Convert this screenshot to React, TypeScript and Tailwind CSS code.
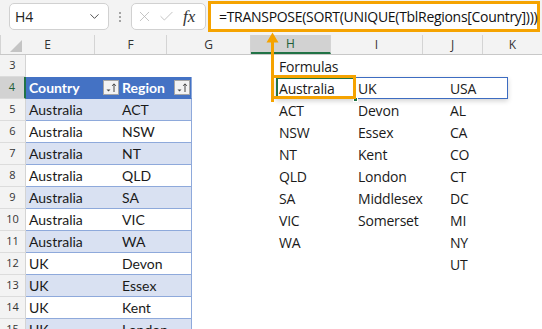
import React from "react";
import { ChevronDown, X, Check } from "lucide-react";

const colW = { E: 94, F: 72, G: 84, H: 80, I: 92, J: 60, K: 60 };

const tableData: [string, string][] = [
  ["Australia", "ACT"],
  ["Australia", "NSW"],
  ["Australia", "NT"],
  ["Australia", "QLD"],
  ["Australia", "SA"],
  ["Australia", "VIC"],
  ["Australia", "WA"],
  ["UK", "Devon"],
  ["UK", "Essex"],
  ["UK", "Kent"],
  ["UK", "London"],
  ["UK", "Middlesex"],
];

const H: Record<number, string> = { 3: "Formulas", 4: "Australia", 5: "ACT", 6: "NSW", 7: "NT", 8: "QLD", 9: "SA", 10: "VIC", 11: "WA" };
const I: Record<number, string> = { 4: "UK", 5: "Devon", 6: "Essex", 7: "Kent", 8: "London", 9: "Middlesex", 10: "Somerset" };
const J: Record<number, string> = { 4: "USA", 5: "AL", 6: "CA", 7: "CO", 8: "CT", 9: "DC", 10: "MI", 11: "NY", 12: "UT" };

function FilterBtn() {
  return (
    <div className="w-[16px] h-[15px] bg-[#f3f3f3] border border-[#a6a6a6] flex items-center justify-center">
      <svg width="14" height="13" viewBox="0 0 14 13">
        <path d="M2.5 8.5 L6.5 8.5 L4.5 10.5 Z" fill="#444" />
        <path d="M10 11 L10 3" stroke="#444" strokeWidth="1" />
        <path d="M8.2 4.8 L10 2.8 L11.8 4.8" stroke="#444" strokeWidth="1" fill="none" />
      </svg>
    </div>
  );
}

export default function App() {
  const rows = [3, 4, 5, 6, 7, 8, 9, 10, 11, 12, 13, 14, 15];
  return (
    <div className="relative w-[542px] h-[329px] overflow-hidden bg-white font-['Open_Sans',sans-serif] text-[#1a1a1a]">
      {/* Toolbar */}
      <div className="h-[35px] bg-[#f3f3f3] flex items-start pt-[3px]">
        <div className="ml-[9px] w-[100px] h-[27px] bg-white border border-[#d1d1d1] rounded-[5px] flex items-center pl-[5px] pr-[6px] justify-between">
          <span className="text-[14px] text-[#222]">H4</span>
          <ChevronDown size={15} strokeWidth={1.5} color="#444" />
        </div>
        <div className="w-[22px] h-[27px] flex flex-col items-center justify-center gap-[2px]">
          <div className="w-[2px] h-[2px] bg-[#8a8a8a] rounded-full" />
          <div className="w-[2px] h-[2px] bg-[#8a8a8a] rounded-full" />
          <div className="w-[2px] h-[2px] bg-[#8a8a8a] rounded-full" />
        </div>
        <div className="w-[75px] h-[27px] bg-white border border-[#d1d1d1] rounded-[5px] flex items-center pl-[4px] gap-[5px]">
          <X size={17} strokeWidth={1.1} color="#b4b4b4" />
          <Check size={17} strokeWidth={1.1} color="#b4b4b4" />
          <span className="ml-[3px] font-['Liberation_Serif',serif] italic text-[17px] text-[#333] leading-none">fx</span>
        </div>
        <div className="ml-[2px] -mt-[2px] w-[332px] h-[31px] bg-white border-[3px] border-[#f5a300] flex items-center pl-[8px]">
          <span className="text-[14px] tracking-[-0.3px] text-[#111] whitespace-nowrap">=TRANSPOSE(SORT(UNIQUE(TblRegions[Country])))</span>
        </div>
      </div>

      {/* Column headers */}
      <div className="flex h-[20px] bg-[#f3f3f3] border-b border-[#c8c8c8]">
        <div className="w-[26px] h-full border-r border-[#d4d4d4] relative">
          <svg className="absolute left-[10px] top-[5px]" width="12" height="12" viewBox="0 0 12 12">
            <path d="M12 0 L12 12 L0 12 Z" fill="#c4c4c4" />
          </svg>
        </div>
        {(Object.keys(colW) as (keyof typeof colW)[]).map((k) => (
          <div
            key={k}
            style={{ width: colW[k] }}
            className={
              "shrink-0 h-full flex items-center justify-center text-[12px] border-r border-[#d4d4d4] " +
              (k === "H" ? "bg-[#d2d2d2] text-[#1e5e38] border-b-2 border-b-[#217346]" : "text-[#333]")
            }
          >
            {k}
          </div>
        ))}
      </div>

      {/* Rows */}
      {rows.map((r) => {
        const inTable = r >= 4;
        const isHead = r === 4;
        const band = r % 2 === 1;
        const tableBg = isHead ? "bg-[#4472c4]" : band ? "bg-[#d9e1f2]" : "bg-white";
        const tableBorder = isHead ? "border-b-[#4472c4]" : "border-b-[#8ea9db]";
        const d = inTable && !isHead ? tableData[r - 5] : null;
        return (
          <div key={r} className="flex h-[22px]">
            <div
              className={
                "w-[26px] shrink-0 h-full flex items-center justify-center text-[11px] border-b border-[#dcdcdc] border-r " +
                (r === 4 ? "bg-[#d2d2d2] text-[#1e5e38] border-r-2 border-r-[#217346]" : "bg-[#f3f3f3] text-[#333] border-r-[#d4d4d4]")
              }
            >
              {r}
            </div>
            {/* E */}
            <div
              style={{ width: colW.E }}
              className={
                "shrink-0 h-full flex items-center justify-between pl-[3px] pr-[1px] font-[Lato,sans-serif] text-[14px] " +
                (inTable ? `${tableBg} border-b ${tableBorder}` : "")
              }
            >
              {isHead ? (
                <>
                  <span className="font-bold text-white">Country</span>
                  <FilterBtn />
                </>
              ) : (
                <span>{d ? d[0] : ""}</span>
              )}
            </div>
            {/* F */}
            <div
              style={{ width: colW.F }}
              className={
                "shrink-0 h-full flex items-center justify-between pl-[2px] pr-[1px] font-[Lato,sans-serif] text-[14px] " +
                (inTable ? `${tableBg} border-b ${tableBorder} border-r border-r-[#8ea9db]` : "")
              }
            >
              {isHead ? (
                <>
                  <span className="font-bold text-white">Region</span>
                  <FilterBtn />
                </>
              ) : (
                <span>{d ? d[1] : ""}</span>
              )}
            </div>
            {/* G */}
            <div style={{ width: colW.G }} className="shrink-0 h-full" />
            {/* H */}
            <div style={{ width: colW.H }} className="shrink-0 h-full flex items-center pl-[3px] text-[14px] tracking-[-0.2px]">
              {H[r] ?? ""}
            </div>
            {/* I */}
            <div style={{ width: colW.I }} className="shrink-0 h-full flex items-center pl-[2px] text-[14px] tracking-[-0.2px]">
              {I[r] ?? ""}
            </div>
            {/* J */}
            <div style={{ width: colW.J }} className="shrink-0 h-full flex items-center pl-[2px] text-[14px] tracking-[-0.2px]">
              {J[r] ?? ""}
            </div>
            <div style={{ width: colW.K }} className="shrink-0 h-full" />
          </div>
        );
      })}

      {/* Spill range border H4:J4 */}
      <div className="absolute left-[276px] top-[77px] w-[232px] h-[22px] border border-[#3d6cc1] shadow-[0_2px_5px_rgba(0,0,0,0.18)] pointer-events-none" />
      {/* Active cell H4 */}
      <div className="absolute left-[276px] top-[77px] w-[80px] h-[22px] border-2 border-[#217346]" />
      <div className="absolute left-[353px] top-[97px] w-[5px] h-[5px] bg-[#217346] border border-white" />

      {/* Orange annotation */}
      <div className="absolute left-[271px] top-[75px] w-[85px] h-[24px] border-[3px] border-[#f5a300]" />
      <div className="absolute left-[271px] top-[40px] w-[3px] h-[62px] bg-[#f5a300]" />
      <svg className="absolute left-[266px] top-[32px]" width="13" height="11" viewBox="0 0 13 11">
        <path d="M6.5 0.5 L12.5 10.5 L0.5 10.5 Z" fill="#f5a300" />
      </svg>
    </div>
  );
}
